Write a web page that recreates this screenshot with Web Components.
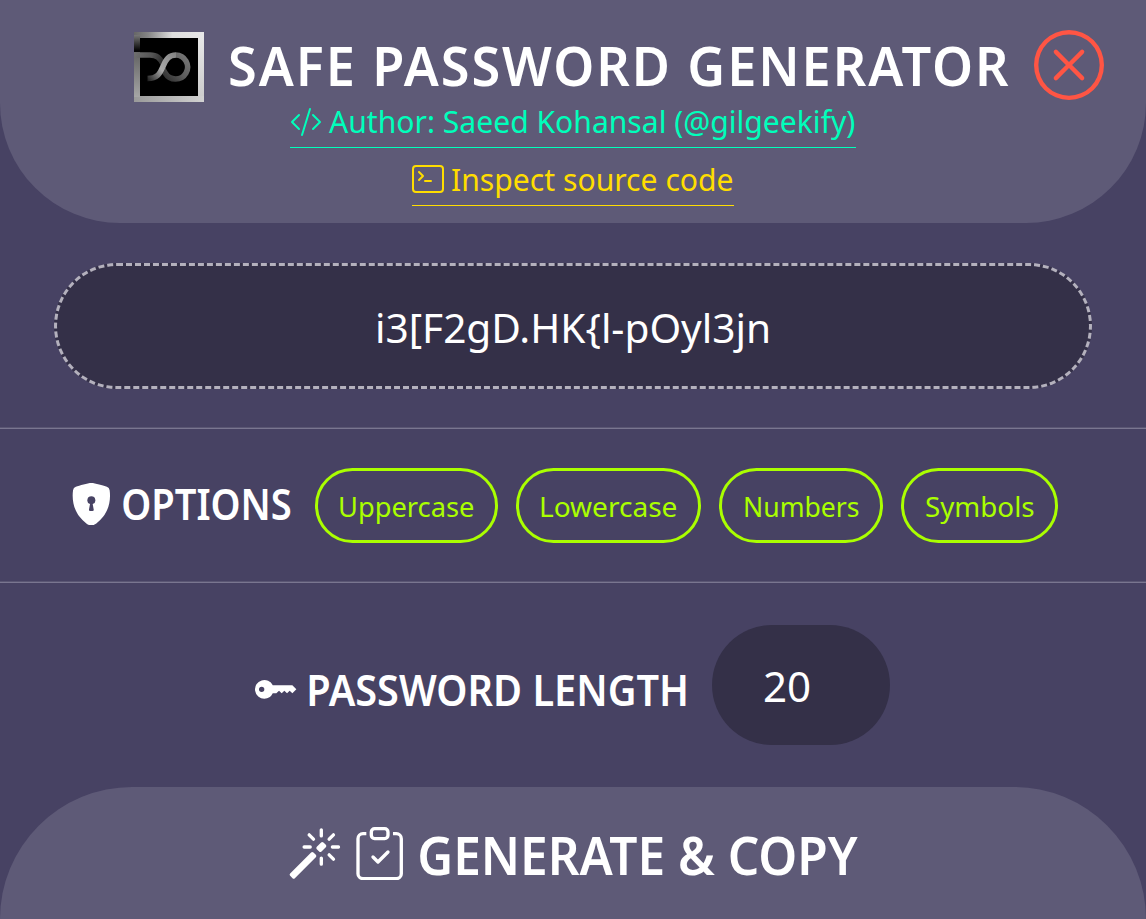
<!DOCTYPE html>
<html lang="en">
<head>
<meta charset="utf-8">
<title>Safe Password Generator</title>
<style>
html,body{margin:0;height:100%;background:#474263}
body{overflow:hidden;font-family:"Noto Sans","Open Sans",sans-serif;color:#fff}
</style>
</head>
<body>
<password-app></password-app>
<script>
// One line of text whose box is its cap height tall and its drawn width wide.
class FitText extends HTMLElement {
  connectedCallback() {
    const w = +this.getAttribute('w'), cap = +this.getAttribute('cap');
    const weight = this.getAttribute('weight') || 400, ls = +(this.getAttribute('ls') || 0);
    const size = cap / 0.714;
    const ctx = document.createElement('canvas').getContext('2d');
    ctx.font = `${weight} ${size}px "Noto Sans", "Open Sans", sans-serif`;
    ctx.letterSpacing = ls + 'px';
    const m = ctx.measureText(this.textContent.trim());
    const k = w / (m.actualBoundingBoxRight + m.actualBoundingBoxLeft);
    this.attachShadow({mode: 'open'}).innerHTML = `<style>
      :host{display:block;flex:none;width:${w}px;height:${cap}px}
      span{display:block;width:max-content;white-space:pre;line-height:${cap}px;font-size:${size}px;font-weight:${weight};
        letter-spacing:${ls}px;transform-origin:0 0;
        transform:translate(${m.actualBoundingBoxLeft * k}px,-.031em) scaleX(${k})}
      </style><span><slot></slot></span>`;
  }
}
customElements.define('fit-text', FitText);

const ICONS = {
  code: '<path d="M10.478 1.647a.5.5 0 1 0-.956-.294l-4 13a.5.5 0 0 0 .956.294l4-13zM4.854 4.146a.5.5 0 0 1 0 .708L1.707 8l3.147 3.146a.5.5 0 0 1-.708.708l-3.5-3.5a.5.5 0 0 1 0-.708l3.5-3.5a.5.5 0 0 1 .708 0zm6.292 0a.5.5 0 0 0 0 .708L14.293 8l-3.147 3.146a.5.5 0 0 0 .708.708l3.5-3.5a.5.5 0 0 0 0-.708l-3.5-3.5a.5.5 0 0 0-.708 0z"/>',
  terminal: '<path d="M6 9a.5.5 0 0 1 .5-.5h3a.5.5 0 0 1 0 1h-3A.5.5 0 0 1 6 9zM3.854 4.146a.5.5 0 1 0-.708.708L4.793 6.5 3.146 8.146a.5.5 0 1 0 .708.708l2-2a.5.5 0 0 0 0-.708l-2-2z"/><path d="M2 1a2 2 0 0 0-2 2v10a2 2 0 0 0 2 2h12a2 2 0 0 0 2-2V3a2 2 0 0 0-2-2H2zm12 1a1 1 0 0 1 1 1v10a1 1 0 0 1-1 1H2a1 1 0 0 1-1-1V3a1 1 0 0 1 1-1h12z"/>',
  close: '<path d="M8 15A7 7 0 1 1 8 1a7 7 0 0 1 0 14zm0 1A8 8 0 1 0 8 0a8 8 0 0 0 0 16z"/><path d="M4.646 4.646a.5.5 0 0 1 .708 0L8 7.293l2.646-2.647a.5.5 0 0 1 .708.708L8.707 8l2.647 2.646a.5.5 0 0 1-.708.708L8 8.707l-2.646 2.647a.5.5 0 0 1-.708-.708L7.293 8 4.646 5.354a.5.5 0 0 1 0-.708z"/>',
  shield: '<path fill-rule="evenodd" d="M8 0c-.69 0-1.843.265-2.928.56-1.11.3-2.229.655-2.887.87a1.54 1.54 0 0 0-1.044 1.262c-.596 4.477.787 7.795 2.465 9.99a11.777 11.777 0 0 0 2.517 2.453c.386.273.744.482 1.048.625.28.132.581.24.829.24s.548-.108.829-.24a7.159 7.159 0 0 0 1.048-.625 11.775 11.775 0 0 0 2.517-2.453c1.678-2.195 3.061-5.513 2.465-9.99a1.541 1.541 0 0 0-1.044-1.263 62.467 62.467 0 0 0-2.887-.87C9.843.266 8.69 0 8 0zm0 5a1.5 1.5 0 0 1 .5 2.915l.385 1.99a.5.5 0 0 1-.491.595h-.788a.5.5 0 0 1-.49-.595l.384-1.99A1.5 1.5 0 0 1 8 5z"/>',
  key: '<path fill-rule="evenodd" d="M3.5 11.5a3.5 3.5 0 1 1 3.163-5H14L15.5 8 14 9.5l-1-1-1 1-1-1-1 1-1-1-1 1H6.663a3.5 3.5 0 0 1-3.163 2zM2.5 9a1 1 0 1 0 0-2 1 1 0 0 0 0 2z"/>',
  magic: '<path d="M9.5 2.672a.5.5 0 1 0 1 0V.843a.5.5 0 0 0-1 0v1.829Zm4.5.035A.5.5 0 0 0 13.293 2L12 3.293a.5.5 0 1 0 .707.707L14 2.707ZM7.293 4A.5.5 0 1 0 8 3.293L6.707 2A.5.5 0 0 0 6 2.707L7.293 4Zm-.621 2.5a.5.5 0 1 0 0-1H4.843a.5.5 0 1 0 0 1h1.829Zm8.485 0a.5.5 0 1 0 0-1h-1.829a.5.5 0 0 0 0 1h1.829ZM13.293 10A.5.5 0 1 0 14 9.293L12.707 8a.5.5 0 1 0-.707.707L13.293 10ZM9.5 11.157a.5.5 0 0 0 1 0V9.328a.5.5 0 0 0-1 0v1.829Zm1.854-5.097a.5.5 0 0 0 0-.706l-.708-.708a.5.5 0 0 0-.707 0L8.646 5.94a.5.5 0 0 0 0 .707l.708.708a.5.5 0 0 0 .707 0l1.293-1.293Zm-3 3a.5.5 0 0 0 0-.706l-.708-.708a.5.5 0 0 0-.707 0L.646 13.94a.5.5 0 0 0 0 .707l.707.707a.5.5 0 0 0 .707 0L8.354 9.06Z"/>',
  clipboard: '<path d="M10.854 7.146a.5.5 0 0 1 0 .708l-3 3a.5.5 0 0 1-.708 0l-1.5-1.5a.5.5 0 1 1 .708-.708L7.5 9.793l2.646-2.647a.5.5 0 0 1 .708 0z"/><path d="M4 1.5H3a2 2 0 0 0-2 2V14a2 2 0 0 0 2 2h10a2 2 0 0 0 2-2V3.5a2 2 0 0 0-2-2h-1v1h1a1 1 0 0 1 1 1V14a1 1 0 0 1-1 1H3a1 1 0 0 1-1-1V3.5a1 1 0 0 1 1-1h1v-1z"/><path d="M9.5 1a.5.5 0 0 1 .5.5v1a.5.5 0 0 1-.5.5h-3a.5.5 0 0 1-.5-.5v-1a.5.5 0 0 1 .5-.5h3zm-3-1A1.5 1.5 0 0 0 5 1.5v1A1.5 1.5 0 0 0 6.5 4h3A1.5 1.5 0 0 0 11 2.5v-1A1.5 1.5 0 0 0 9.5 0h-3z"/>'
};
class UiIcon extends HTMLElement {
  connectedCallback() {
    const s = this.getAttribute('size');
    this.attachShadow({mode: 'open'}).innerHTML = `<style>:host{display:block;flex:none;width:${s}px;height:${s}px}svg{display:block}</style>
      <svg width="${s}" height="${s}" viewBox="0 0 16 16" fill="currentColor">${ICONS[this.getAttribute('name')]}</svg>`;
  }
}
customElements.define('ui-icon', UiIcon);

class BrandLogo extends HTMLElement {
  connectedCallback() {
    this.attachShadow({mode: 'open'}).innerHTML = `<style>:host{display:block;flex:none;width:70px;height:70px}svg{display:block}</style>
    <svg width="70" height="70" viewBox="0 0 70 70" fill="none">
      <defs>
        <linearGradient id="f" x1="0" y1="0" x2="1" y2="0"><stop offset="0" stop-color="#666"/><stop offset=".2" stop-color="#858585"/><stop offset=".55" stop-color="#dedede"/><stop offset="1" stop-color="#e8e8e8"/></linearGradient>
        <linearGradient id="l" x1="0" y1="0" x2="0" y2="1"><stop offset="0" stop-color="#777"/><stop offset=".9" stop-color="#050505"/></linearGradient>
        <linearGradient id="m" x1="0" y1="0" x2="0" y2="1"><stop offset="0" stop-color="#626262"/><stop offset="1" stop-color="#a5a5a5"/></linearGradient>
        <linearGradient id="b" x1="0" y1="0" x2="1" y2="0"><stop offset="0" stop-color="#999"/><stop offset="1" stop-color="#d2d2d2"/></linearGradient>
        <linearGradient id="r" x1="0" y1="0" x2="0" y2="1"><stop offset="0" stop-color="#e8e8e8"/><stop offset="1" stop-color="#cacaca"/></linearGradient>
        <linearGradient id="t" gradientUnits="userSpaceOnUse" x1="0" y1="20" x2="30" y2="32"><stop offset="0" stop-color="#707070"/><stop offset=".55" stop-color="#555"/><stop offset="1" stop-color="#222"/></linearGradient>
        <linearGradient id="o" gradientUnits="userSpaceOnUse" x1="30" y1="48" x2="54" y2="25"><stop offset="0" stop-color="#2c2c2c"/><stop offset=".5" stop-color="#5c5c5c"/><stop offset="1" stop-color="#777"/></linearGradient>
        <linearGradient id="s" gradientUnits="userSpaceOnUse" x1="13" y1="47" x2="42" y2="23"><stop offset="0" stop-color="#222"/><stop offset=".45" stop-color="#aaa"/><stop offset="1" stop-color="#858585"/></linearGradient>
      </defs>
      <path fill="url(#f)" d="M0 0h70v6H0z"/><path fill="url(#r)" d="M64 4h6v66h-6z"/><path fill="url(#b)" d="M0 64h70v6H0z"/>
      <path fill="url(#l)" d="M0 3h6v17H0z"/><path fill="url(#m)" d="M0 20h6v45H0z"/>
      <path fill="#000" d="M6 6h58v58H6z"/>
      <path stroke="url(#t)" stroke-width="5.5" d="M0 23h16c7 0 10 3 13 9"/>
      <path stroke="url(#o)" stroke-width="5.5" d="M41.7 23a12 12 0 1 1-10.5 18l-3-5"/>
      <path stroke="url(#s)" stroke-width="5.5" d="M13.5 46.5C24 46.5 26 41 29 34.500C32 27 35 23 42 23"/>
    </svg>`;
  }
}
customElements.define('brand-logo', BrandLogo);

class AppLink extends HTMLElement {
  connectedCallback() {
    this.attachShadow({mode: 'open'}).innerHTML = `<style>
      :host{display:flex;box-sizing:border-box;height:43px;align-items:flex-start;border-bottom:1px solid currentColor}
      </style><slot></slot>`;
  }
}
customElements.define('app-link', AppLink);

class OptionPill extends HTMLElement {
  connectedCallback() {
    this.attachShadow({mode: 'open'}).innerHTML = `<style>
      :host{display:flex;box-sizing:border-box;height:75px;border:3px solid #af0;border-radius:38px;color:#af0;justify-content:center;padding:26.7px 0 0 1px}
      </style><slot></slot>`;
  }
}
customElements.define('option-pill', OptionPill);

class PasswordApp extends HTMLElement {
  connectedCallback() {
    this.attachShadow({mode: 'open'}).innerHTML = `<style>
      :host{display:flex;flex-direction:column;height:919px;width:1146px}
      *{box-sizing:border-box}
      header{height:223px;background:#5e5a77;border-radius:0 0 120px 120px;display:flex;flex-direction:column;align-items:center}
      .title{display:flex;align-self:stretch;height:75px;margin-top:30px;padding-left:134px;flex:none}
      .title brand-logo{margin-top:2px}
      .title fit-text{margin:18.3px 25px 0 26px}
      .title ui-icon{color:#ff5544}
      .author{color:#00ffbb;width:566px}
      .source{color:#ffdd00;width:322px;margin-top:15px}
      .author ui-icon{margin-top:1px}.author fit-text{margin:6px 0 0 7px}
      .author,.source{flex:none}
      .source fit-text{margin:5.700px 0 0 8px}
      .out{height:206px;padding:40px 54px;flex:none}
      .field{height:126px;border:3px dashed #b4b1bd;border-radius:63px;background:#343048;display:flex;justify-content:center;padding-top:48.300px}
      .opts{height:156px;border-top:1px solid #5a5673;border-bottom:1px solid #7a7690;box-shadow:inset 0 1px #7a7690,inset 0 -1px #5a5673;display:flex;padding:40px 0 0 70px;margin-top:-2px;flex:none}
      .opts ui-icon{margin-top:14.700px}.opts>fit-text{margin:22px 24.800px 0 10px}
      .pills{display:flex;gap:18px}
      .len{display:flex;flex:1;padding:42px 0 0 255.300px}
      .len ui-icon{margin-top:43px}.len>fit-text{margin:51px 26px 0 11px}
      .num{width:178px;height:120px;border-radius:60px;background:#343048;padding:48.300px 0 0 52.500px}
      footer{height:132px;flex:none;background:#5e5a77;border-radius:132px 132px 0 0;display:flex;padding:39.800px 0 0 288px}
      footer .clip{margin-left:11.700px}footer fit-text{margin:11.300px 0 0 13.500px}
      </style>
      <header>
        <div class="title"><brand-logo></brand-logo><fit-text w="779" cap="38.5" weight="600" ls="2">SAFE PASSWORD GENERATOR</fit-text><ui-icon name="close" size="70"></ui-icon></div>
        <app-link class="author"><ui-icon name="code" size="32"></ui-icon><fit-text w="526" cap="22.3">Author: Saeed Kohansal (@gilgeekify)</fit-text></app-link>
        <app-link class="source"><ui-icon name="terminal" size="32"></ui-icon><fit-text w="281" cap="22.3">Inspect source code</fit-text></app-link>
      </header>
      <div class="out"><div class="field"><fit-text w="390" cap="29">i3[F2gD.HK{l-pOyl3jn</fit-text></div></div>
      <div class="opts"><ui-icon name="shield" size="42.7"></ui-icon><fit-text w="167.5" cap="30.5" weight="600">OPTIONS</fit-text>
        <div class="pills">
          <option-pill style="width:183px"><fit-text w="133" cap="19.5">Uppercase</fit-text></option-pill>
          <option-pill style="width:185px"><fit-text w="135" cap="19.5">Lowercase</fit-text></option-pill>
          <option-pill style="width:164px"><fit-text w="113.500" cap="19.5">Numbers</fit-text></option-pill>
          <option-pill style="width:157px"><fit-text w="107.500" cap="19.5">Symbols</fit-text></option-pill>
        </div></div>
      <div class="len"><ui-icon name="key" size="42.7"></ui-icon><fit-text w="377" cap="30.5" weight="600">PASSWORD LENGTH</fit-text>
        <div class="num"><fit-text w="45.500" cap="29.5">20</fit-text></div></div>
      <footer><ui-icon name="magic" size="53.3"></ui-icon><ui-icon class="clip" name="clipboard" size="53.3"></ui-icon><fit-text w="438" cap="37.5" weight="600">GENERATE &amp; COPY</fit-text></footer>`;
  }
}
customElements.define('password-app', PasswordApp);
</script>
</body>
</html>
